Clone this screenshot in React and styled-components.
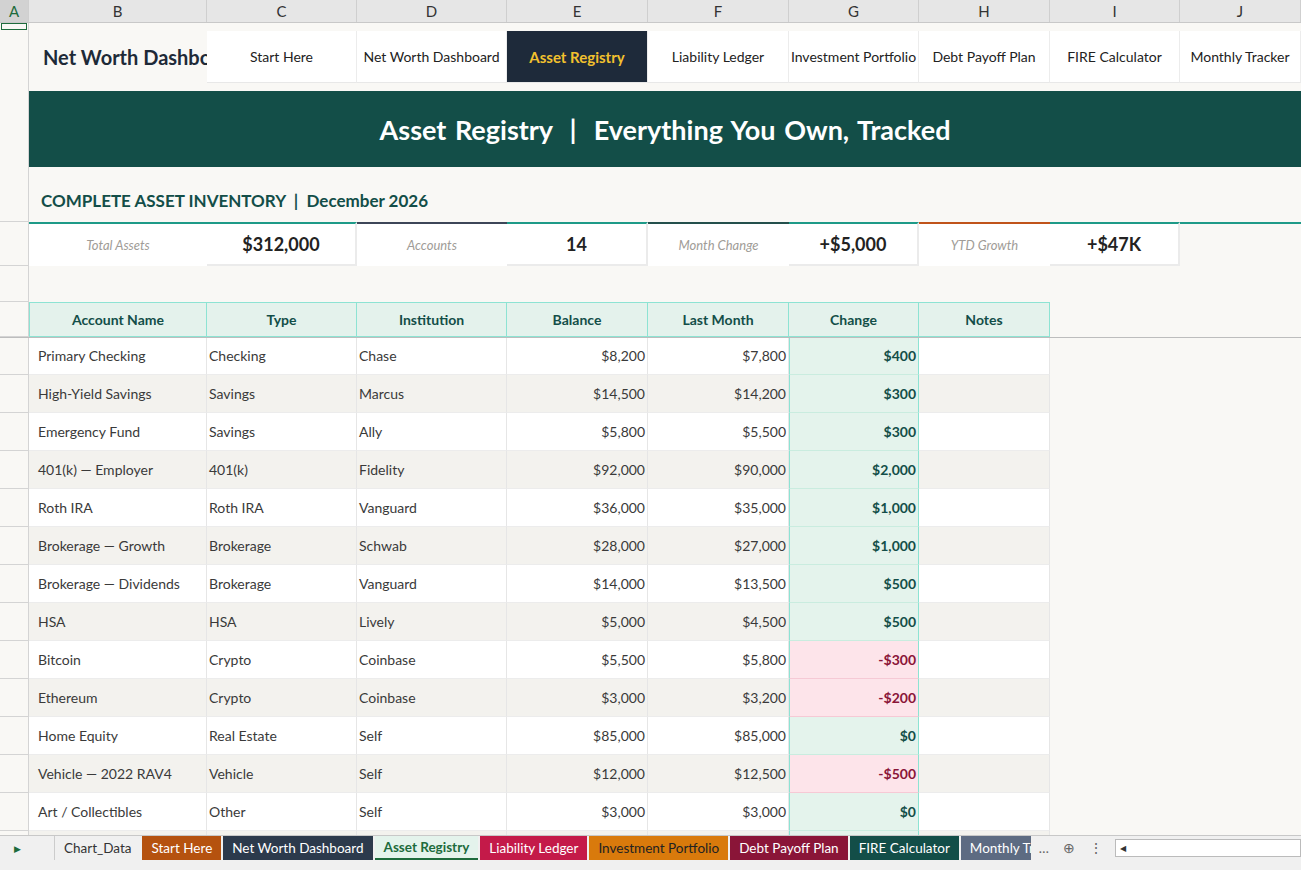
import React from "react";
import styled, { createGlobalStyle, css } from "styled-components";

const COLS = "29px 178px 150px 150px 141px 141px 130px 131px 130px 1fr";

const Global = createGlobalStyle`
  html, body { margin: 0; height: 100%; overflow: hidden; }
  body { font-family: Lato, "Open Sans", sans-serif; background: #f9f8f5; color: #333; }
`;

const Page = styled.div`
  width: 1301px;
  height: 870px;
  display: flex;
  flex-direction: column;
  overflow: hidden;
`;

const ColHeaders = styled.div`
  display: grid;
  grid-template-columns: ${COLS};
  height: 22px;
  background: #e6e6e6;
  border-bottom: 1px solid #c8c8c8;
  flex-shrink: 0;
`;

const ColHead = styled.div`
  display: flex;
  align-items: center;
  justify-content: center;
  font-size: 15px;
  color: ${(p) => (p.$active ? "#1d6b3c" : "#333")};
  background: ${(p) => (p.$active ? "#d2d2d2" : "transparent")};
  border-right: 1px solid #cfcfcf;
`;

const Sheet = styled.div`
  flex: 1;
  overflow: hidden;
  position: relative;
`;

const Row = styled.div`
  display: grid;
  grid-template-columns: ${COLS};
  height: ${(p) => p.$h}px;
`;

const Gutter = styled.div`
  border-right: 1px solid #d4d4d4;
  border-bottom: ${(p) => (p.$line ? "1px solid #d4d4d4" : "none")};
  background: #f9f8f5;
  position: relative;
`;

const SelCell = styled.div`
  position: absolute;
  left: 1px;
  top: 0;
  width: 26px;
  height: 7px;
  border: 1.5px solid #1d6b3c;
  box-sizing: border-box;
`;

const Title = styled.div`
  display: flex;
  align-items: center;
  padding-left: 14px;
  font-size: 20px;
  font-weight: 700;
  color: #1e2a38;
  white-space: nowrap;
  overflow: hidden;
`;

const NavTab = styled.div`
  display: flex;
  align-items: center;
  justify-content: center;
  font-size: 14px;
  white-space: nowrap;
  overflow: hidden;
  background: ${(p) => (p.$active ? "#1e2a3a" : "#fff")};
  color: ${(p) => (p.$active ? "#f2c12e" : "#222")};
  font-weight: ${(p) => (p.$active ? 700 : 400)};
  font-size: ${(p) => (p.$active ? 15 : 14)}px;
  border-right: 1px solid #ececec;
  border-bottom: 1px solid #e8e8e8;
`;

const Banner = styled.div`
  grid-column: 2 / -1;
  background: #134e48;
  color: #fff;
  font-size: 27px;
  font-weight: 700;
  display: flex;
  align-items: center;
  justify-content: center;
  word-spacing: 2px;
  white-space: pre;
`;

const Section = styled.div`
  grid-column: 2 / 8;
  display: flex;
  align-items: flex-end;
  padding: 0 0 11px 12px;
  font-size: 17px;
  font-weight: 700;
  color: #134e48;
  white-space: pre;
`;

const Kpi = styled.div`
  display: flex;
  align-items: center;
  justify-content: center;
  border-top: 2px solid ${(p) => p.$top};
  ${(p) =>
    p.$label
      ? css`
          background: #fff;
          font-style: italic;
          font-size: 13px;
          color: #a09c97;
        `
      : css`
          background: #fff;
          font-size: 18px;
          font-weight: 700;
          color: #222;
          border-bottom: 2px solid #ebebeb;
          border-right: 2px solid #ebebeb;
        `}
`;

const KpiRest = styled.div`
  border-top: 2px solid #1e9a88;
`;

const Th = styled.div`
  background: #e4f2ec;
  border: 1px solid #8de3d3;
  border-left: ${(p) => (p.$first ? "1px solid #8de3d3" : "none")};
  display: flex;
  align-items: center;
  justify-content: center;
  font-size: 14px;
  font-weight: 700;
  color: #134e48;
`;

const Td = styled.div`
  display: flex;
  align-items: center;
  justify-content: ${(p) => (p.$right ? "flex-end" : "flex-start")};
  padding: 0 ${(p) => (p.$right ? "2px" : "0")} 0 ${(p) => (p.$pl ?? 2)}px;
  font-size: 14px;
  color: #3a3a3a;
  background: ${(p) => (p.$alt ? "#f3f2ee" : "#fff")};
  border-right: 1px solid #e6e6e6;
  border-bottom: 1px solid #ececec;
  white-space: nowrap;
`;

const ChangeTd = styled(Td)`
  background: ${(p) => (p.$neg ? "#fde4ea" : "#e4f3ec")};
  color: ${(p) => (p.$neg ? "#8a1538" : "#134e48")};
  font-weight: 700;
  border-left: 1px solid #8de3d3;
  border-right: 1px solid #8de3d3;
  border-bottom: 1px solid ${(p) => (p.$neg ? "#f6c9d5" : "#c9ecdf")};
`;

const FreezeLine = styled.div`
  position: absolute;
  left: 0;
  right: 0;
  top: 314px;
  height: 1px;
  background: #bdbdbd;
`;

const TabBar = styled.div`
  height: 24px;
  flex-shrink: 0;
  display: flex;
  align-items: stretch;
  background: #f0f0f0;
  border-top: 1px solid #c8c8c8;
  font-size: 13.5px;
`;

const Arrow = styled.div`
  width: 55px;
  display: flex;
  align-items: center;
  padding-left: 14px;
  box-sizing: border-box;
  color: #1d6b3c;
  font-size: 9px;
  border-right: 1px solid #ccc;
`;

const SheetTab = styled.div`
  display: flex;
  align-items: center;
  padding: 0 9px;
  margin-right: 2px;
  background: ${(p) => p.$bg || "transparent"};
  color: ${(p) => p.$fg || "#fff"};
  font-weight: ${(p) => (p.$active ? 700 : 400)};
  border-bottom: ${(p) => (p.$active ? "2px solid #1d6b3c" : "none")};
  white-space: nowrap;
  overflow: hidden;
  flex-shrink: 0;
  ${(p) => p.$w && css`width: ${p.$w}px; padding-right: 0; box-sizing: border-box;`}
`;

const Tools = styled.div`
  display: flex;
  align-items: center;
  gap: 14px;
  padding-left: 6px;
  color: #666;
  flex-shrink: 0;
`;

const Scroll = styled.div`
  flex: 1;
  margin: 3px 0 3px 12px;
  background: #fff;
  border: 1px solid #bbb;
  display: flex;
  align-items: center;
  font-size: 8px;
  padding-left: 4px;
`;

const Status = styled.div`
  height: 10px;
  background: #f0f0f0;
  flex-shrink: 0;
`;

const nav = ["Start Here", "Net Worth Dashboard", "Asset Registry", "Liability Ledger", "Investment Portfolio", "Debt Payoff Plan", "FIRE Calculator", "Monthly Tracker"];

const kpis = [
  ["Total Assets", "$312,000", "#1e9a88", "#1e9a88"],
  ["Accounts", "14", "#3d4658", "#1e9a88"],
  ["Month Change", "+$5,000", "#24504c", "#1e9a88"],
  ["YTD Growth", "+$47K", "#c0531a", "#1e9a88"],
];

const rows = [
  ["Primary Checking", "Checking", "Chase", "$8,200", "$7,800", "$400"],
  ["High-Yield Savings", "Savings", "Marcus", "$14,500", "$14,200", "$300"],
  ["Emergency Fund", "Savings", "Ally", "$5,800", "$5,500", "$300"],
  ["401(k) — Employer", "401(k)", "Fidelity", "$92,000", "$90,000", "$2,000"],
  ["Roth IRA", "Roth IRA", "Vanguard", "$36,000", "$35,000", "$1,000"],
  ["Brokerage — Growth", "Brokerage", "Schwab", "$28,000", "$27,000", "$1,000"],
  ["Brokerage — Dividends", "Brokerage", "Vanguard", "$14,000", "$13,500", "$500"],
  ["HSA", "HSA", "Lively", "$5,000", "$4,500", "$500"],
  ["Bitcoin", "Crypto", "Coinbase", "$5,500", "$5,800", "-$300"],
  ["Ethereum", "Crypto", "Coinbase", "$3,000", "$3,200", "-$200"],
  ["Home Equity", "Real Estate", "Self", "$85,000", "$85,000", "$0"],
  ["Vehicle — 2022 RAV4", "Vehicle", "Self", "$12,000", "$12,500", "-$500"],
  ["Art / Collectibles", "Other", "Self", "$3,000", "$3,000", "$0"],
  ["", "", "", "", "", ""],
];

const tabs = [
  { t: "Chart_Data", fg: "#333" },
  { t: "Start Here", bg: "#b5520f" },
  { t: "Net Worth Dashboard", bg: "#2c3a4c" },
  { t: "Asset Registry", bg: "#e4f3ec", fg: "#1d6b3c", active: true },
  { t: "Liability Ledger", bg: "#c41a49" },
  { t: "Investment Portfolio", bg: "#d97a0c", fg: "#222" },
  { t: "Debt Payoff Plan", bg: "#8a1538" },
  { t: "FIRE Calculator", bg: "#134e48" },
  { t: "Monthly Tracker", bg: "#5d6b82", w: 70 },
];

export default function App() {
  return (
    <Page>
      <Global />
      <ColHeaders>
        {"ABCDEFGHIJ".split("").map((c, i) => (
          <ColHead key={c} $active={i === 0}>{c}</ColHead>
        ))}
      </ColHeaders>
      <Sheet>
        <Row $h={8}><Gutter><SelCell /></Gutter></Row>
        <Row $h={52}>
          <Gutter />
          <Title>Net Worth Dashboard</Title>
          {nav.map((n, i) => (
            <NavTab key={n} $active={i === 2}>{n}</NavTab>
          ))}
        </Row>
        <Row $h={8}><Gutter /></Row>
        <Row $h={76}>
          <Gutter />
          <Banner>Asset Registry  |  Everything You Own, Tracked</Banner>
        </Row>
        <Row $h={55}>
          <Gutter $line />
          <Section>COMPLETE ASSET INVENTORY  |  December 2026</Section>
        </Row>
        <Row $h={44}>
          <Gutter $line />
          {kpis.map(([l, v, a, b]) => (
            <React.Fragment key={l}>
              <Kpi $label $top={a}>{l}</Kpi>
              <Kpi $top={b}>{v}</Kpi>
            </React.Fragment>
          ))}
          <KpiRest />
        </Row>
        <Row $h={36}><Gutter $line /></Row>
        <Row $h={35}>
          <Gutter $line />
          {["Account Name", "Type", "Institution", "Balance", "Last Month", "Change", "Notes"].map((h, i) => (
            <Th key={h} $first={i === 0}>{h}</Th>
          ))}
        </Row>
        {rows.map((r, i) => {
          const alt = i % 2 === 1;
          const neg = r[5].startsWith("-");
          return (
            <Row $h={38} key={i}>
              <Gutter $line />
              <Td $alt={alt} $pl={9}>{r[0]}</Td>
              <Td $alt={alt}>{r[1]}</Td>
              <Td $alt={alt}>{r[2]}</Td>
              <Td $alt={alt} $right>{r[3]}</Td>
              <Td $alt={alt} $right>{r[4]}</Td>
              <ChangeTd $alt={alt} $right $neg={neg}>{r[5]}</ChangeTd>
              <Td $alt={alt} />
            </Row>
          );
        })}
        <FreezeLine />
      </Sheet>
      <TabBar>
        <Arrow>▶</Arrow>
        {tabs.map((t) => (
          <SheetTab key={t.t} $bg={t.bg} $fg={t.fg} $active={t.active} $w={t.w}>{t.t}</SheetTab>
        ))}
        <Tools>
          <span>…</span>
          <span>⊕</span>
          <span>⋮</span>
        </Tools>
        <Scroll>◀</Scroll>
      </TabBar>
      <Status />
    </Page>
  );
}
